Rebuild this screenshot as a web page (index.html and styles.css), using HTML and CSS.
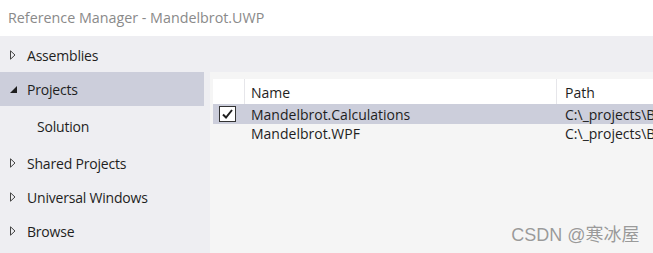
FILE: index.html
```html
<!DOCTYPE html>
<html lang="en">
<head>
  <meta charset="UTF-8" />
  <title>Reference Manager - Mandelbrot.UWP</title>
  <link rel="stylesheet" href="styles.css">
</head>
<body>
  <div class="titlebar">Reference Manager - Mandelbrot.UWP</div>

  <div class="main">
    <div class="sidebar">
      <div class="nav-item">
        <svg class="arrow" width="6" height="10" viewBox="0 0 6 10"><path d="M0.5 0.8 L5 5 L0.5 9.2 Z" fill="none" stroke="#444" stroke-width="1"/></svg>
        Assemblies
      </div>
      <div class="nav-item selected">
        <svg class="arrow" width="7" height="7" viewBox="0 0 7 7"><path d="M7 0 L7 7 L0 7 Z" fill="#1e1e1e"/></svg>
        Projects
      </div>
      <div class="nav-item child">Solution</div>
      <div class="nav-item">
        <svg class="arrow" width="6" height="10" viewBox="0 0 6 10"><path d="M0.5 0.8 L5 5 L0.5 9.2 Z" fill="none" stroke="#444" stroke-width="1"/></svg>
        Shared Projects
      </div>
      <div class="nav-item">
        <svg class="arrow" width="6" height="10" viewBox="0 0 6 10"><path d="M0.5 0.8 L5 5 L0.5 9.2 Z" fill="none" stroke="#444" stroke-width="1"/></svg>
        Universal Windows
      </div>
      <div class="nav-item">
        <svg class="arrow" width="6" height="10" viewBox="0 0 6 10"><path d="M0.5 0.8 L5 5 L0.5 9.2 Z" fill="none" stroke="#444" stroke-width="1"/></svg>
        Browse
      </div>
    </div>

    <div class="content">
      <div class="grid">
        <div class="grid-row header">
          <div class="cell check"></div>
          <div class="cell name">Name</div>
          <div class="cell path">Path</div>
        </div>
        <div class="grid-row selected">
          <div class="cell check">
            <span class="checkbox">
              <svg width="11" height="10" viewBox="0 0 11 10"><path d="M1 5.5 L4 8.5 L10 1" fill="none" stroke="#1e1e1e" stroke-width="2"/></svg>
            </span>
          </div>
          <div class="cell name">Mandelbrot.Calculations</div>
          <div class="cell path">C:\_projects\B</div>
        </div>
        <div class="grid-row">
          <div class="cell check"></div>
          <div class="cell name">Mandelbrot.WPF</div>
          <div class="cell path">C:\_projects\B</div>
        </div>
      </div>
      <div class="watermark">CSDN @寒冰屋</div>
    </div>
  </div>
</body>
</html>
```

FILE: styles.css
```css
body {
  margin: 0;
  font-family: 'Open Sans', 'Noto Sans', sans-serif;
  font-size: 14px;
  color: #1e1e1e;
  background: #eeeef2;
  width: 653px;
  height: 253px;
  overflow: hidden;
}

.titlebar {
  height: 36px;
  line-height: 36px;
  padding-left: 8px;
  background: #ffffff;
  color: #8a8a8a;
  font-size: 14.3px;
}

.main {
  display: flex;
  height: 217px;
}

.sidebar {
  width: 210px;
  flex-shrink: 0;
  padding-top: 2px;
}

.nav-item {
  display: flex;
  align-items: center;
  height: 34px;
  width: 204px;
  padding-left: 10px;
  box-sizing: border-box;
  letter-spacing: -0.2px;
}

.nav-item.selected {
  background: #cccedb;
}

.nav-item.child {
  padding-left: 37px;
  height: 40px;
}

.arrow {
  margin-right: 11px;
  flex-shrink: 0;
}

.nav-item.selected .arrow {
  margin-right: 10px;
  margin-top: 1px;
}

.content {
  flex: 1;
  margin-top: 36px;
  background: #f5f5f5;
  padding: 7px 0 0 3px;
  position: relative;
}

.grid-row {
  display: flex;
  height: 20px;
  line-height: 20px;
}

.grid-row.header {
  height: 25px;
  line-height: 27px;
  background: #ffffff;
}

.grid-row.selected {
  background: #cccedb;
  line-height: 21px;
}

.cell {
  box-sizing: border-box;
  white-space: nowrap;
  overflow: hidden;
}

.cell.check {
  width: 32px;
  display: flex;
  align-items: center;
  padding-left: 6px;
}

.cell.name {
  width: 312px;
  padding-left: 6px;
}

.cell.path {
  flex: 1;
  padding-left: 8px;
}

.header .cell.check,
.header .cell.name {
  border-right: 1px solid #e6e6ea;
}

.checkbox {
  display: flex;
  align-items: center;
  justify-content: center;
  width: 15px;
  height: 14px;
  background: #ffffff;
  border: 1px solid #333;
}

.watermark {
  position: absolute;
  right: 16px;
  bottom: 7px;
  font-family: 'Liberation Sans', 'Noto Sans CJK SC', sans-serif;
  font-size: 18px;
  color: #9a9a9a;
  text-shadow: 0 0 1px #fff;
}
```
